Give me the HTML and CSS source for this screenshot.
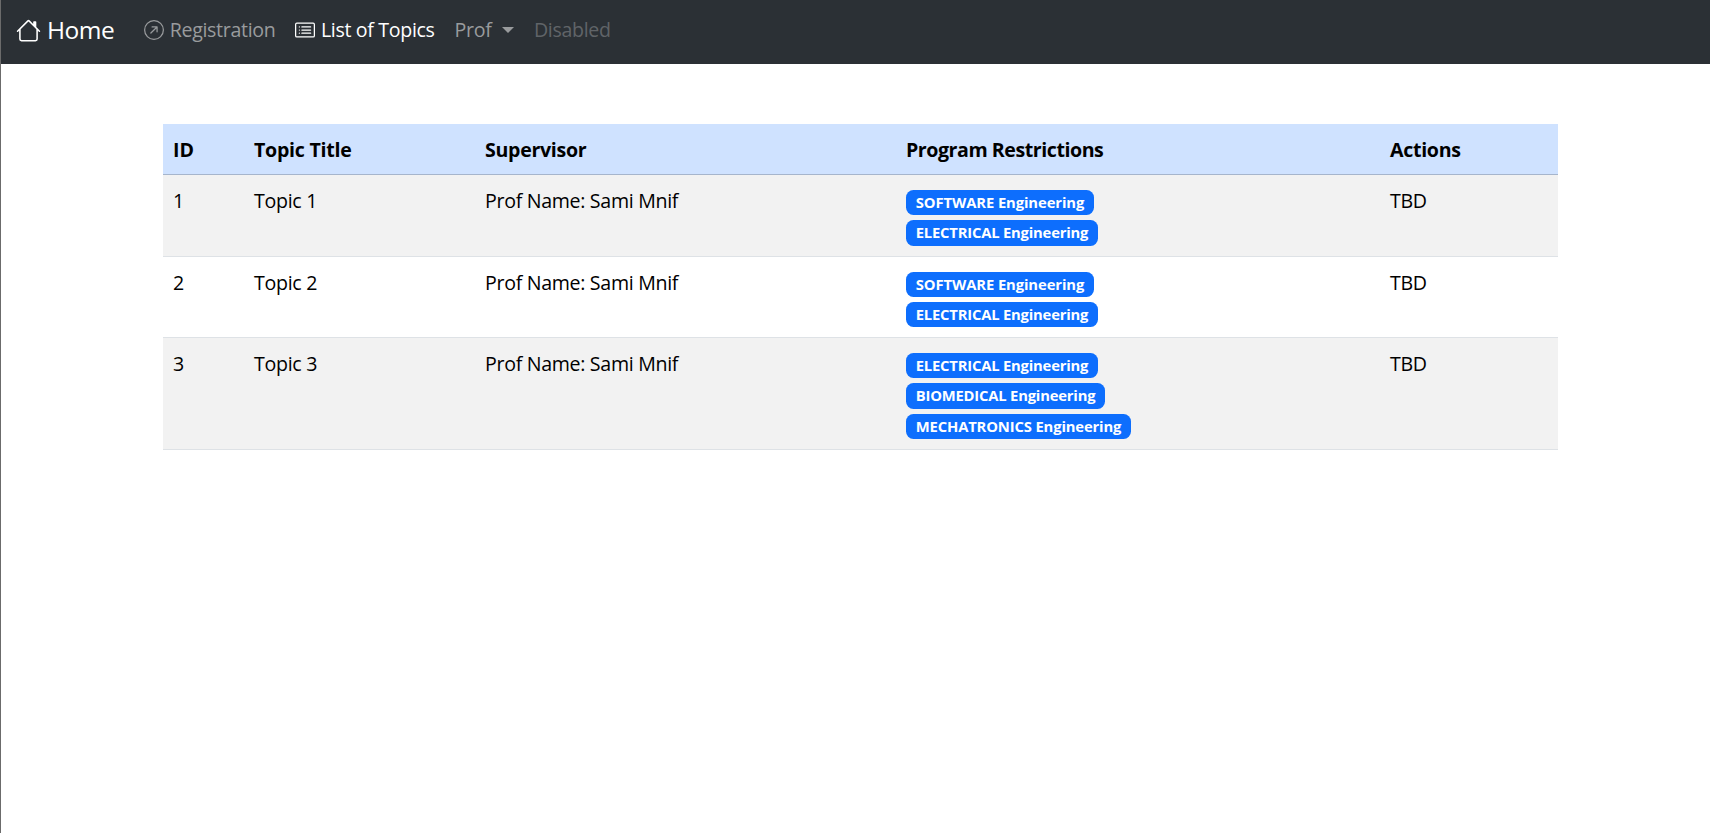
FILE: index.html
```
<!DOCTYPE html>
<html lang="en">
<head>
<meta charset="utf-8">
<title>List of Topics</title>
<link rel="stylesheet" href="styles.css">
</head>
<body>
<nav class="navbar">
  <a class="brand"><svg class="icon" viewBox="0 0 16 16" fill="currentColor"><path d="M8.707 1.5a1 1 0 0 0-1.414 0L.646 8.146a.5.5 0 0 0 .708.708L2 8.207V13.500A1.500 1.500 0 0 0 3.500 15h9a1.500 1.500 0 0 0 1.500-1.500V8.207l.646.647a.5.5 0 0 0 .708-.708L13 5.793V2.500a.5.5 0 0 0-.5-.5h-1a.5.5 0 0 0-.5.5v1.293zM13 7.207V13.500a.5.5 0 0 1-.5.5h-9a.5.5 0 0 1-.5-.5V7.207l5-5z"/></svg><span class="label">Home</span></a>
  <a class="link"><svg class="icon" viewBox="0 0 16 16" fill="currentColor"><path fill-rule="evenodd" d="M1 8a7 7 0 1 0 14 0A7 7 0 0 0 1 8m15 0A8 8 0 1 1 0 8a8 8 0 0 1 16 0M5.854 10.803a.5.5 0 1 1-.708-.707L9.243 6H6.475a.5.5 0 1 1 0-1h3.975a.5.5 0 0 1 .5.5v3.975a.5.5 0 1 1-1 0V6.707z"/></svg><span class="label">Registration</span></a>
  <a class="link active"><svg class="icon" viewBox="0 0 16 16" fill="currentColor"><path d="M14.500 3a.5.5 0 0 1 .5.5v9a.5.5 0 0 1-.5.5h-13a.5.5 0 0 1-.5-.5v-9a.5.5 0 0 1 .5-.5zm-13-1A1.500 1.500 0 0 0 0 3.500v9A1.500 1.500 0 0 0 1.500 14h13a1.500 1.500 0 0 0 1.500-1.500v-9A1.500 1.500 0 0 0 14.500 2z"/><path d="M5 8a.5.5 0 0 1 .5-.5h7a.5.5 0 0 1 0 1h-7A.5.5 0 0 1 5 8m0-2.500a.5.5 0 0 1 .5-.5h7a.5.5 0 0 1 0 1h-7a.5.5 0 0 1-.5-.5m0 5a.5.5 0 0 1 .5-.5h7a.5.5 0 0 1 0 1h-7a.5.5 0 0 1-.5-.5m-1-5a.5.5 0 1 1-1 0 .5.5 0 0 1 1 0M4 8a.5.5 0 1 1-1 0 .5.5 0 0 1 1 0m0 2.500a.5.5 0 1 1-1 0 .5.5 0 0 1 1 0"/></svg><span class="label">List of Topics</span></a>
  <a class="link"><span class="label">Prof</span><i class="caret"></i></a>
  <a class="link disabled"><span class="label">Disabled</span></a>
</nav>
<main class="content">
<table class="table">
<colgroup><col class="c-id"><col class="c-title"><col class="c-sup"><col class="c-prog"><col></colgroup>
<thead><tr><th class="h-id">ID</th><th class="h-title">Topic Title</th><th>Supervisor</th><th class="h-prog">Program Restrictions</th><th>Actions</th></tr></thead>
<tbody>
<tr><td>1</td><td>Topic 1</td><td>Prof Name: Sami Mnif</td><td class="programs"><div class="badges"><span class="badge software">SOFTWARE Engineering</span><span class="badge">ELECTRICAL Engineering</span></div></td><td>TBD</td></tr>
<tr><td>2</td><td>Topic 2</td><td>Prof Name: Sami Mnif</td><td class="programs"><div class="badges"><span class="badge software">SOFTWARE Engineering</span><span class="badge">ELECTRICAL Engineering</span></div></td><td>TBD</td></tr>
<tr><td>3</td><td>Topic 3</td><td>Prof Name: Sami Mnif</td><td class="programs"><div class="badges"><span class="badge">ELECTRICAL Engineering</span><span class="badge">BIOMEDICAL Engineering</span><span class="badge mechatronics">MECHATRONICS Engineering</span></div></td><td>TBD</td></tr>
</tbody>
</table>
</main>
</body>
</html>
```
FILE: styles.css
```
* { box-sizing: border-box; }
body { margin: 0; min-height: 833px; border-left: 1px solid #6b6b6b; font: 19.6px/30px "Open Sans", sans-serif; letter-spacing: -0.31px; color: #000; background: #fff; }
.navbar { display: flex; align-items: center; height: 64px; padding: 0 15px 4px; background: #2b3035; }
.brand, .link { display: flex; align-items: center; }
.brand { color: #fff; font-size: 24.5px; letter-spacing: -0.5px; margin-right: 20px; gap: 6px; }
.link { color: #999b9d; padding: 0 10px; gap: 5.5px; letter-spacing: -0.33px; }
.link.active { color: #fff; }
.link.disabled { color: #606468; }
.icon { width: 20px; height: 20px; flex: none; }
.brand .icon { width: 25px; height: 25px; }
.caret { border: 6px solid transparent; border-top-color: currentColor; border-bottom: 0; margin-left: 5px; }
.content { padding: 60px 0 0 162px; }
.table { width: 1395px; table-layout: fixed; border-collapse: collapse; }
.c-id { width: 81px; }
.c-title { width: 231px; }
.c-sup { width: 421px; }
.c-prog { width: 484px; }
.table th, .table td { padding: 11px 10px 9px; text-align: left; vertical-align: top; border-bottom: 1px solid #dee2e6; }
.table th { background: #cfe2ff; border-color: #a6b5cc; }
.table .h-id { letter-spacing: 0; }
.table .h-title { letter-spacing: -0.26px; }
.table .h-prog { letter-spacing: -0.45px; }
tbody tr:nth-child(odd) { background: #f2f2f2; }
.table .programs { padding: 15px 10px 10px; }
.badges { display: flex; flex-direction: column; align-items: flex-start; gap: 5px; }
.badge { height: 25.25px; padding: 0 9.75px; border-radius: 7.5px; background: #0d6efd; color: #fff; font-size: 14.8px; line-height: 25px; font-weight: 700; letter-spacing: -0.2px; }
.badge.software { letter-spacing: -0.1px; }
.badge.mechatronics { letter-spacing: -0.15px; }
```
